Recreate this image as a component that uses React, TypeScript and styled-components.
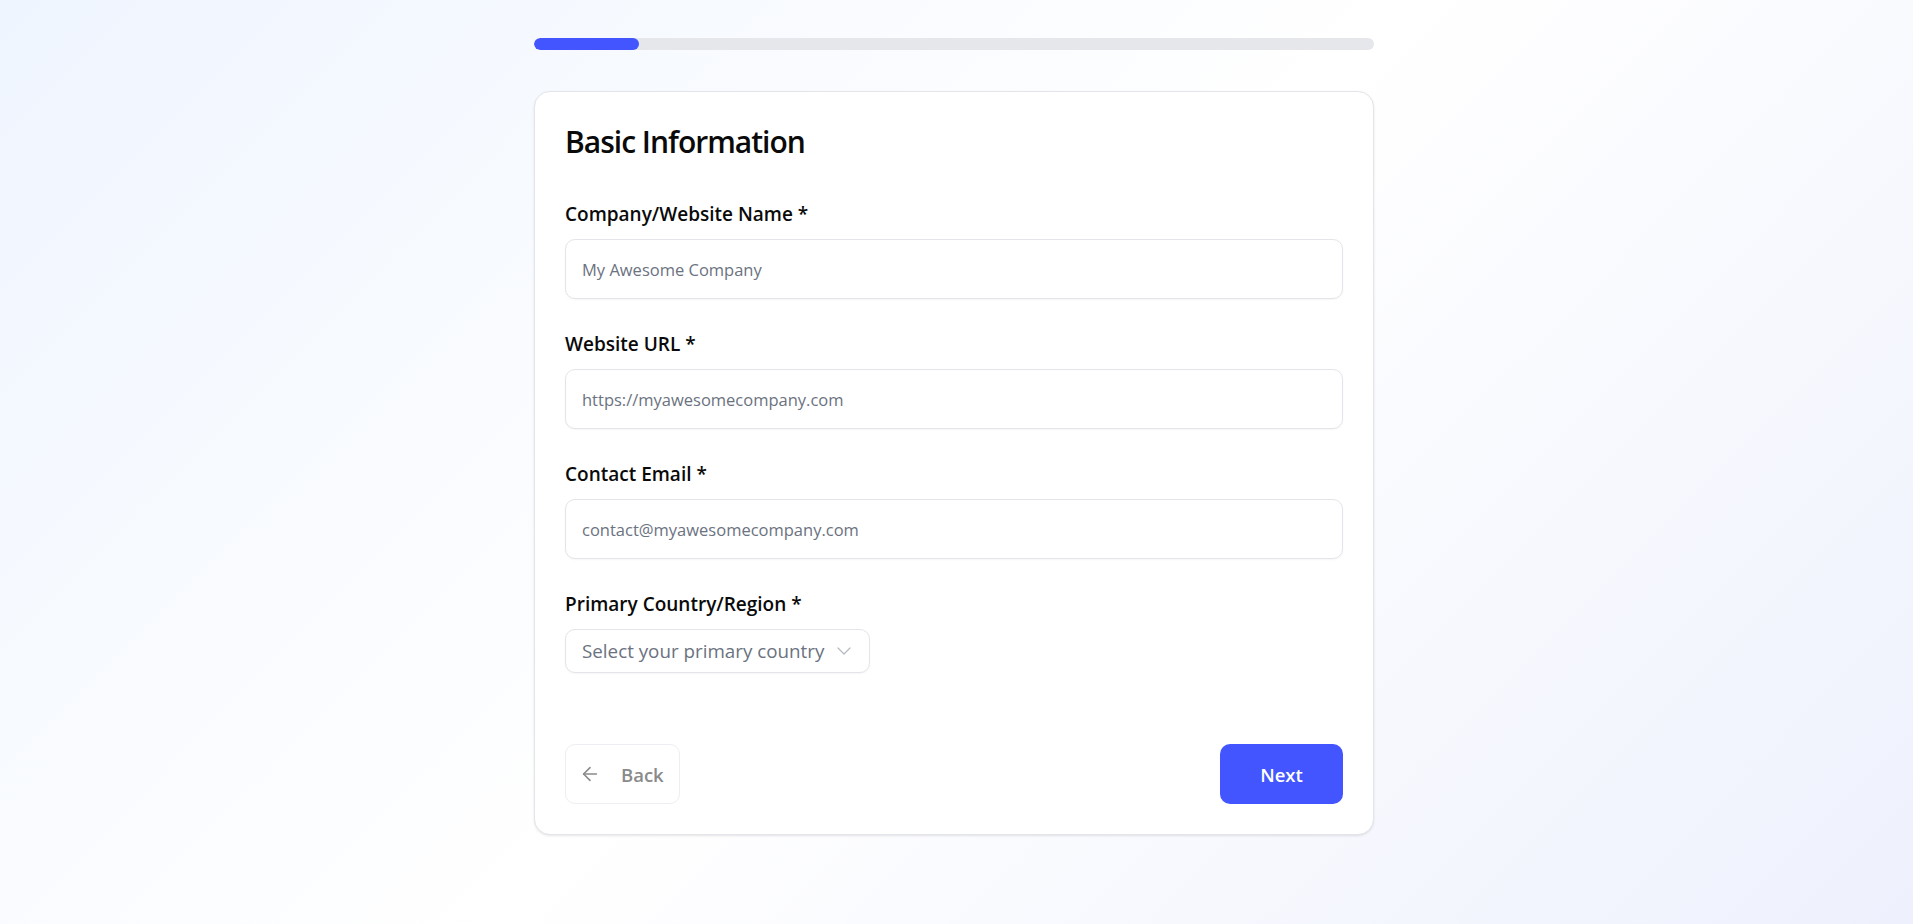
import React, { useState } from "react";
import styled, { createGlobalStyle } from "styled-components";
import { ArrowLeft, ChevronDown } from "lucide-react";

const GlobalStyle = createGlobalStyle`
  * {
    box-sizing: border-box;
  }
  html, body {
    margin: 0;
    padding: 0;
  }
  body {
    font-family: "Segoe UI", "Open Sans", "Noto Sans", sans-serif;
    color: #0a0a0a;
  }
`;

const Page = styled.main`
  min-height: 100vh;
  padding: 38px 21px 40px 16px;
  background: linear-gradient(135deg, #eff5ff 0%, #ffffff 50%, #eef1fd 100%);
`;

const Wrapper = styled.div`
  width: 840px;
  margin: 0 auto;
  display: flex;
  flex-direction: column;
  gap: 41px;
`;

const Track = styled.div`
  height: 12px;
  border-radius: 999px;
  background: #e5e7eb;
  overflow: hidden;
`;

const Fill = styled.div`
  height: 100%;
  border-radius: 999px;
  background: #4255ff;
`;

const Card = styled.section`
  background: #ffffff;
  border: 1px solid #e3e5ea;
  border-radius: 16px;
  padding: 30px;
  box-shadow: 0 1px 3px rgba(0, 0, 0, 0.08), 0 1px 2px -1px rgba(0, 0, 0, 0.08);
`;

const Title = styled.h2`
  margin: 0 0 37px;
  font-size: 30px;
  line-height: 40px;
  font-weight: 600;
  letter-spacing: -1px;
`;

const Form = styled.div`
  display: flex;
  flex-direction: column;
  gap: 30px;
`;

const Field = styled.div`
  display: flex;
  flex-direction: column;
  gap: 10px;
`;

const Label = styled.label`
  font-size: 19px;
  line-height: 30px;
  font-weight: 600;
  color: #0a0a0a;
`;

const Input = styled.input`
  height: 60px;
  width: 100%;
  padding: 0 16px;
  border: 1px solid #e3e5ea;
  border-radius: 10px;
  background: #ffffff;
  font-family: inherit;
  font-size: 16.5px;
  color: #0a0a0a;
  box-shadow: 0 1px 2px rgba(0, 0, 0, 0.04);
  outline: none;
  &::placeholder {
    color: #6b7280;
  }
`;

const SelectTrigger = styled.button`
  align-self: flex-start;
  height: 44px;
  display: flex;
  align-items: center;
  gap: 8px;
  padding: 0 13px 0 16px;
  border: 1px solid #e3e5ea;
  border-radius: 10px;
  background: #ffffff;
  box-shadow: 0 1px 2px rgba(0, 0, 0, 0.04);
  font-family: inherit;
  font-size: 18.8px;
  color: #6b7280;
  cursor: pointer;
  svg {
    color: #b4b8c0;
  }
`;

const Footer = styled.div`
  margin-top: 71px;
  display: flex;
  justify-content: space-between;
  align-items: center;
`;

const BackButton = styled.button`
  height: 60px;
  display: flex;
  align-items: center;
  gap: 20px;
  padding: 0 15px 0 13px;
  border: 1px solid #eceef1;
  border-radius: 10px;
  background: #ffffff;
  font-family: inherit;
  font-size: 18.5px;
  font-weight: 600;
  color: #8a8a8a;
  cursor: not-allowed;
`;

const NextButton = styled.button`
  height: 60px;
  width: 123px;
  border: none;
  border-radius: 10px;
  background: #4255ff;
  font-family: inherit;
  font-size: 18.5px;
  font-weight: 600;
  color: #ffffff;
  cursor: pointer;
`;

const fields = [
  { id: "name", label: "Company/Website Name *", placeholder: "My Awesome Company" },
  { id: "url", label: "Website URL *", placeholder: "https://myawesomecompany.com" },
  { id: "email", label: "Contact Email *", placeholder: "contact@myawesomecompany.com" },
];

export default function App() {
  const [step] = useState(1);
  const totalSteps = 8;

  return (
    <>
      <GlobalStyle />
      <Page>
        <Wrapper>
          <Track>
            <Fill style={{ width: `${(step / totalSteps) * 100}%` }} />
          </Track>
          <Card>
            <Title>Basic Information</Title>
            <Form>
              {fields.map((f) => (
                <Field key={f.id}>
                  <Label htmlFor={f.id}>{f.label}</Label>
                  <Input id={f.id} placeholder={f.placeholder} />
                </Field>
              ))}
              <Field>
                <Label>Primary Country/Region *</Label>
                <SelectTrigger type="button">
                  Select your primary country
                  <ChevronDown size={24} strokeWidth={1.2} />
                </SelectTrigger>
              </Field>
            </Form>
            <Footer>
              <BackButton type="button" disabled>
                <ArrowLeft size={22} strokeWidth={1.7} />
                Back
              </BackButton>
              <NextButton type="button">Next</NextButton>
            </Footer>
          </Card>
        </Wrapper>
      </Page>
    </>
  );
}
